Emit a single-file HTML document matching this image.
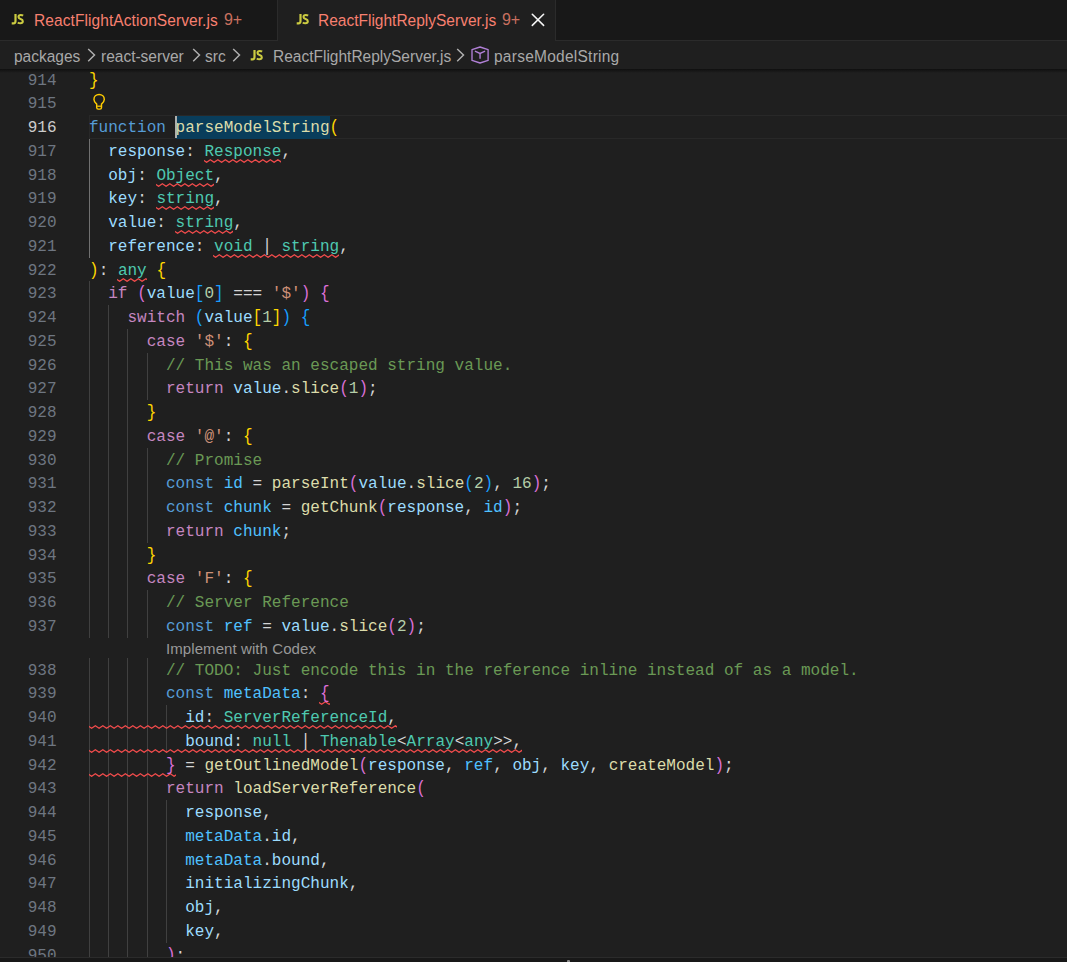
<!DOCTYPE html>
<html><head><meta charset="utf-8">
<style>
*{margin:0;padding:0;box-sizing:border-box}
html,body{width:1067px;height:962px;overflow:hidden;background:#1f1f1f}
body{position:relative;font-family:"Liberation Sans",sans-serif}
.abs{position:absolute}
#tabs{left:0;top:0;width:1067px;height:41px;background:#181818;border-bottom:1px solid #2b2b2b}
.tab{top:0;height:40px;border-right:1px solid #2b2b2b;background:#181818}
.tab.active{background:#1f1f1f;height:41px}
.tt{position:absolute;top:10.6px;font-size:15.5px;color:#f88070;white-space:nowrap;line-height:20px;transform:scaleY(1.09);transform-origin:0 15.4px}
.badge{position:absolute;top:10.3px;font-size:16px;color:#c8705f;white-space:nowrap;line-height:20px;letter-spacing:-0.2px}
.js{position:absolute;line-height:0}
#bc{left:0;top:41px;width:1067px;height:28px;background:#1f1f1f}
.bt{position:absolute;top:5.6px;font-size:15.5px;color:#a9a9a9;white-space:nowrap;line-height:20px;transform:scaleY(1.09);transform-origin:0 15.4px}
.chev{position:absolute;top:7px}
#shadow{left:0;top:69px;width:1067px;height:4px;background:linear-gradient(rgba(0,0,0,.5),rgba(0,0,0,0));z-index:5}
#editor{left:0;top:69px;width:1067px;height:888px;overflow:hidden;background:#1f1f1f}
.ln{position:absolute;left:0;width:56.5px;text-align:right;font-family:"Liberation Mono",monospace;font-size:16px;line-height:23.75px;color:#6e7681}
.ln.cur{color:#cccccc}
.code{position:absolute;left:89px;font-family:"Liberation Mono",monospace;font-size:16.04px;line-height:23.75px;color:#d4d4d4;white-space:pre}
.g{position:absolute;width:1px}
.pipe{display:inline-block;transform:translateY(-0.5px) scaleY(1.18);transform-origin:50% 10.5px}
.br{display:inline-block;transform:translateY(-0.8px) scaleY(1.14);transform-origin:50% 10.5px}
.curline{position:absolute;left:89px;width:980px;height:23.75px;border:1.25px solid #282828}
.sel{position:absolute;background:#093d5b}
.cursor{position:absolute;width:2px;background:#aeafad}
.lens{position:absolute;font-size:15px;letter-spacing:0.08px;color:#999999;line-height:20px;white-space:nowrap;padding-top:1.5px}
#bottom{left:0;top:957px;width:1067px;height:5px;background:#181818;border-top:1px solid #2b2b2b}
</style></head><body>
<div id="tabs" class="abs">
  <div class="tab abs" style="left:0;width:278px">
    <span class="js" style="left:11px;top:13.6px"><svg width="14" height="12" viewBox="0 0 14 12" style="overflow:visible"><path d="M4.5 0.1V7.3Q4.5 9.3 2.5 9.3H0.7" fill="none" stroke="#cbcb41" stroke-width="2.2"/><path d="M12.1 1.7Q11.2 1.05 9.8 1.05Q7.5 1.05 7.5 2.9Q7.5 4.2 9.6 4.9Q11.8 5.65 11.8 7.3Q11.8 9.3 9.4 9.3Q7.8 9.3 6.8 8.5" fill="none" stroke="#cbcb41" stroke-width="2.1"/></svg></span>
    <span class="tt" style="left:34px;letter-spacing:0.08px">ReactFlightActionServer.js</span>
    <span class="badge" style="left:224px">9+</span>
  </div>
  <div class="tab abs active" style="left:278px;width:278px">
    <span class="js" style="left:18px;top:13.6px"><svg width="14" height="12" viewBox="0 0 14 12" style="overflow:visible"><path d="M4.5 0.1V7.3Q4.5 9.3 2.5 9.3H0.7" fill="none" stroke="#cbcb41" stroke-width="2.2"/><path d="M12.1 1.7Q11.2 1.05 9.8 1.05Q7.5 1.05 7.5 2.9Q7.5 4.2 9.6 4.9Q11.8 5.65 11.8 7.3Q11.8 9.3 9.4 9.3Q7.8 9.3 6.8 8.5" fill="none" stroke="#cbcb41" stroke-width="2.1"/></svg></span>
    <span class="tt" style="left:40px">ReactFlightReplyServer.js</span>
    <span class="badge" style="left:224px">9+</span>
    <svg class="abs" style="left:253px;top:13px" width="14" height="14" viewBox="0 0 14 14"><path d="M1.3 1.3L12.6 12.4M12.6 1.3L1.3 12.4" stroke="#f4f4f4" stroke-width="1.6" stroke-linecap="round"/></svg>
  </div>
</div>
<div id="bc" class="abs">
  <span class="bt" style="left:14px">packages</span>
  <svg class="chev" style="left:86.5px" width="10" height="15" viewBox="0 0 10 15"><path d="M1.2 1.0L7.5 7.1L1.2 13.2" fill="none" stroke="#b0b0b0" stroke-width="1.45"/></svg>
  <span class="bt" style="left:101px">react-server</span>
  <svg class="chev" style="left:191.5px" width="10" height="15" viewBox="0 0 10 15"><path d="M1.2 1.0L7.5 7.1L1.2 13.2" fill="none" stroke="#b0b0b0" stroke-width="1.45"/></svg>
  <span class="bt" style="left:205px">src</span>
  <svg class="chev" style="left:231.5px" width="10" height="15" viewBox="0 0 10 15"><path d="M1.2 1.0L7.5 7.1L1.2 13.2" fill="none" stroke="#b0b0b0" stroke-width="1.45"/></svg>
  <span class="js" style="left:250px;top:8.7px"><svg width="14" height="12" viewBox="0 0 14 12" style="overflow:visible"><path d="M4.5 0.1V7.3Q4.5 9.3 2.5 9.3H0.7" fill="none" stroke="#cbcb41" stroke-width="2.2"/><path d="M12.1 1.7Q11.2 1.05 9.8 1.05Q7.5 1.05 7.5 2.9Q7.5 4.2 9.6 4.9Q11.8 5.65 11.8 7.3Q11.8 9.3 9.4 9.3Q7.8 9.3 6.8 8.5" fill="none" stroke="#cbcb41" stroke-width="2.1"/></svg></span>
  <span class="bt" style="left:273px">ReactFlightReplyServer.js</span>
  <svg class="chev" style="left:455.5px" width="10" height="15" viewBox="0 0 10 15"><path d="M1.2 1.0L7.5 7.1L1.2 13.2" fill="none" stroke="#b0b0b0" stroke-width="1.45"/></svg>
  <svg class="abs" style="left:470px;top:4px" width="20" height="20" viewBox="0 0 20 20"><path d="M10.05 2L18.1 4.6V15.4L10.05 18L2 15.4V4.6Z" fill="none" stroke="#b180d7" stroke-width="1.35" stroke-linejoin="round"/><path d="M4.9 6.2L10.05 8.4L15.1 6.2M10.05 8.4V13.8" fill="none" stroke="#b180d7" stroke-width="1.35"/></svg>
  <span class="bt" style="left:494px;letter-spacing:0.25px">parseModelString</span>
</div>
<div id="editor" class="abs">
<div class="g" style="left:89.00px;top:69.75px;height:118.75px;background:#404040"></div>
<div class="g" style="left:89.00px;top:212.25px;height:356.25px;background:#404040"></div>
<div class="g" style="left:89.00px;top:588.50px;height:308.75px;background:#404040"></div>
<div class="g" style="left:108.00px;top:236.00px;height:332.50px;background:#404040"></div>
<div class="g" style="left:108.00px;top:588.50px;height:308.75px;background:#404040"></div>
<div class="g" style="left:127.00px;top:259.75px;height:308.75px;background:#404040"></div>
<div class="g" style="left:127.00px;top:588.50px;height:308.75px;background:#404040"></div>
<div class="g" style="left:147.00px;top:283.50px;height:47.50px;background:#404040"></div>
<div class="g" style="left:147.00px;top:378.50px;height:95.00px;background:#404040"></div>
<div class="g" style="left:147.00px;top:521.00px;height:47.50px;background:#404040"></div>
<div class="g" style="left:147.00px;top:588.50px;height:308.75px;background:#404040"></div>
<div class="g" style="left:166.00px;top:636.00px;height:47.50px;background:#404040"></div>
<div class="g" style="left:166.00px;top:731.00px;height:142.50px;background:#404040"></div>
<div class="g" style="left:89px;top:69.75px;height:118.75px;background:#707070"></div>
<div class="curline" style="top:46.00px"></div>
<div class="sel" style="left:175.62px;top:46.50px;width:154.00px;height:23.45px"></div>
<div class="cursor" style="left:175.12px;top:47.00px;height:21.75px"></div>
<svg class="abs" style="left:203.73px;top:89.90px;overflow:hidden" width="77.77" height="4.6"><polyline points="-1.15,0.80 2.60,3.30 6.35,0.80 10.10,3.30 13.85,0.80 17.60,3.30 21.35,0.80 25.10,3.30 28.85,0.80 32.60,3.30 36.35,0.80 40.10,3.30 43.85,0.80 47.60,3.30 51.35,0.80 55.10,3.30 58.85,0.80 62.60,3.30 66.35,0.80 70.10,3.30 73.85,0.80 77.60,3.30 81.35,0.80 85.10,3.30" fill="none" stroke="#f14c4c" stroke-width="1.3"/></svg>
<svg class="abs" style="left:155.61px;top:113.65px;overflow:hidden" width="58.52" height="4.6"><polyline points="-1.15,0.80 2.60,3.30 6.35,0.80 10.10,3.30 13.85,0.80 17.60,3.30 21.35,0.80 25.10,3.30 28.85,0.80 32.60,3.30 36.35,0.80 40.10,3.30 43.85,0.80 47.60,3.30 51.35,0.80 55.10,3.30 58.85,0.80 62.60,3.30" fill="none" stroke="#f14c4c" stroke-width="1.3"/></svg>
<svg class="abs" style="left:155.61px;top:137.40px;overflow:hidden" width="58.52" height="4.6"><polyline points="-1.15,0.80 2.60,3.30 6.35,0.80 10.10,3.30 13.85,0.80 17.60,3.30 21.35,0.80 25.10,3.30 28.85,0.80 32.60,3.30 36.35,0.80 40.10,3.30 43.85,0.80 47.60,3.30 51.35,0.80 55.10,3.30 58.85,0.80 62.60,3.30" fill="none" stroke="#f14c4c" stroke-width="1.3"/></svg>
<svg class="abs" style="left:174.86px;top:161.15px;overflow:hidden" width="58.52" height="4.6"><polyline points="-1.15,0.80 2.60,3.30 6.35,0.80 10.10,3.30 13.85,0.80 17.60,3.30 21.35,0.80 25.10,3.30 28.85,0.80 32.60,3.30 36.35,0.80 40.10,3.30 43.85,0.80 47.60,3.30 51.35,0.80 55.10,3.30 58.85,0.80 62.60,3.30" fill="none" stroke="#f14c4c" stroke-width="1.3"/></svg>
<svg class="abs" style="left:213.36px;top:184.90px;overflow:hidden" width="125.89" height="4.6"><polyline points="-1.15,0.80 2.60,3.30 6.35,0.80 10.10,3.30 13.85,0.80 17.60,3.30 21.35,0.80 25.10,3.30 28.85,0.80 32.60,3.30 36.35,0.80 40.10,3.30 43.85,0.80 47.60,3.30 51.35,0.80 55.10,3.30 58.85,0.80 62.60,3.30 66.35,0.80 70.10,3.30 73.85,0.80 77.60,3.30 81.35,0.80 85.10,3.30 88.85,0.80 92.60,3.30 96.35,0.80 100.10,3.30 103.85,0.80 107.60,3.30 111.35,0.80 115.10,3.30 118.85,0.80 122.60,3.30 126.35,0.80 130.10,3.30" fill="none" stroke="#f14c4c" stroke-width="1.3"/></svg>
<svg class="abs" style="left:117.11px;top:208.65px;overflow:hidden" width="29.64" height="4.6"><polyline points="-1.15,0.80 2.60,3.30 6.35,0.80 10.10,3.30 13.85,0.80 17.60,3.30 21.35,0.80 25.10,3.30 28.85,0.80 32.60,3.30 36.35,0.80" fill="none" stroke="#f14c4c" stroke-width="1.3"/></svg>
<svg class="abs" style="left:319.23px;top:632.40px;overflow:hidden" width="10.39" height="4.6"><polyline points="-1.15,0.80 2.60,3.30 6.35,0.80 10.10,3.30 13.85,0.80 17.60,3.30" fill="none" stroke="#f14c4c" stroke-width="1.3"/></svg>
<svg class="abs" style="left:88.52px;top:656.15px;overflow:hidden" width="308.48" height="4.6"><polyline points="-1.15,0.80 2.60,3.30 6.35,0.80 10.10,3.30 13.85,0.80 17.60,3.30 21.35,0.80 25.10,3.30 28.85,0.80 32.60,3.30 36.35,0.80 40.10,3.30 43.85,0.80 47.60,3.30 51.35,0.80 55.10,3.30 58.85,0.80 62.60,3.30 66.35,0.80 70.10,3.30 73.85,0.80 77.60,3.30 81.35,0.80 85.10,3.30 88.85,0.80 92.60,3.30 96.35,0.80 100.10,3.30 103.85,0.80 107.60,3.30 111.35,0.80 115.10,3.30 118.85,0.80 122.60,3.30 126.35,0.80 130.10,3.30 133.85,0.80 137.60,3.30 141.35,0.80 145.10,3.30 148.85,0.80 152.60,3.30 156.35,0.80 160.10,3.30 163.85,0.80 167.60,3.30 171.35,0.80 175.10,3.30 178.85,0.80 182.60,3.30 186.35,0.80 190.10,3.30 193.85,0.80 197.60,3.30 201.35,0.80 205.10,3.30 208.85,0.80 212.60,3.30 216.35,0.80 220.10,3.30 223.85,0.80 227.60,3.30 231.35,0.80 235.10,3.30 238.85,0.80 242.60,3.30 246.35,0.80 250.10,3.30 253.85,0.80 257.60,3.30 261.35,0.80 265.10,3.30 268.85,0.80 272.60,3.30 276.35,0.80 280.10,3.30 283.85,0.80 287.60,3.30 291.35,0.80 295.10,3.30 298.85,0.80 302.60,3.30 306.35,0.80 310.10,3.30 313.85,0.80" fill="none" stroke="#f14c4c" stroke-width="1.3"/></svg>
<svg class="abs" style="left:88.52px;top:679.90px;overflow:hidden" width="433.61" height="4.6"><polyline points="-1.15,0.80 2.60,3.30 6.35,0.80 10.10,3.30 13.85,0.80 17.60,3.30 21.35,0.80 25.10,3.30 28.85,0.80 32.60,3.30 36.35,0.80 40.10,3.30 43.85,0.80 47.60,3.30 51.35,0.80 55.10,3.30 58.85,0.80 62.60,3.30 66.35,0.80 70.10,3.30 73.85,0.80 77.60,3.30 81.35,0.80 85.10,3.30 88.85,0.80 92.60,3.30 96.35,0.80 100.10,3.30 103.85,0.80 107.60,3.30 111.35,0.80 115.10,3.30 118.85,0.80 122.60,3.30 126.35,0.80 130.10,3.30 133.85,0.80 137.60,3.30 141.35,0.80 145.10,3.30 148.85,0.80 152.60,3.30 156.35,0.80 160.10,3.30 163.85,0.80 167.60,3.30 171.35,0.80 175.10,3.30 178.85,0.80 182.60,3.30 186.35,0.80 190.10,3.30 193.85,0.80 197.60,3.30 201.35,0.80 205.10,3.30 208.85,0.80 212.60,3.30 216.35,0.80 220.10,3.30 223.85,0.80 227.60,3.30 231.35,0.80 235.10,3.30 238.85,0.80 242.60,3.30 246.35,0.80 250.10,3.30 253.85,0.80 257.60,3.30 261.35,0.80 265.10,3.30 268.85,0.80 272.60,3.30 276.35,0.80 280.10,3.30 283.85,0.80 287.60,3.30 291.35,0.80 295.10,3.30 298.85,0.80 302.60,3.30 306.35,0.80 310.10,3.30 313.85,0.80 317.60,3.30 321.35,0.80 325.10,3.30 328.85,0.80 332.60,3.30 336.35,0.80 340.10,3.30 343.85,0.80 347.60,3.30 351.35,0.80 355.10,3.30 358.85,0.80 362.60,3.30 366.35,0.80 370.10,3.30 373.85,0.80 377.60,3.30 381.35,0.80 385.10,3.30 388.85,0.80 392.60,3.30 396.35,0.80 400.10,3.30 403.85,0.80 407.60,3.30 411.35,0.80 415.10,3.30 418.85,0.80 422.60,3.30 426.35,0.80 430.10,3.30 433.85,0.80 437.60,3.30" fill="none" stroke="#f14c4c" stroke-width="1.3"/></svg>
<svg class="abs" style="left:88.52px;top:703.65px;overflow:hidden" width="87.11" height="4.6"><polyline points="-1.15,0.80 2.60,3.30 6.35,0.80 10.10,3.30 13.85,0.80 17.60,3.30 21.35,0.80 25.10,3.30 28.85,0.80 32.60,3.30 36.35,0.80 40.10,3.30 43.85,0.80 47.60,3.30 51.35,0.80 55.10,3.30 58.85,0.80 62.60,3.30 66.35,0.80 70.10,3.30 73.85,0.80 77.60,3.30 81.35,0.80 85.10,3.30 88.85,0.80 92.60,3.30" fill="none" stroke="#f14c4c" stroke-width="1.3"/></svg>
<div class="ln" style="top:1.0px">914</div>
<div class="code" style="top:1.0px"><span class="br" style="color:#ffd700">}</span></div>
<div class="ln" style="top:24.0px">915</div>
<div class="code" style="top:24.0px"></div>
<div class="ln cur" style="top:48.0px">916</div>
<div class="code" style="top:48.0px"><span style="color:#569cd6">function</span><span style="color:#d4d4d4"> </span><span style="color:#dcdcaa">parseModelString</span><span class="br" style="color:#ffd700">(</span></div>
<div class="ln" style="top:72.0px">917</div>
<div class="code" style="top:72.0px">  <span style="color:#9cdcfe">response</span><span style="color:#d4d4d4">: </span><span style="color:#4ec9b0">Response</span><span style="color:#d4d4d4">,</span></div>
<div class="ln" style="top:96.0px">918</div>
<div class="code" style="top:96.0px">  <span style="color:#9cdcfe">obj</span><span style="color:#d4d4d4">: </span><span style="color:#4ec9b0">Object</span><span style="color:#d4d4d4">,</span></div>
<div class="ln" style="top:119.0px">919</div>
<div class="code" style="top:119.0px">  <span style="color:#9cdcfe">key</span><span style="color:#d4d4d4">: </span><span style="color:#4ec9b0">string</span><span style="color:#d4d4d4">,</span></div>
<div class="ln" style="top:143.0px">920</div>
<div class="code" style="top:143.0px">  <span style="color:#9cdcfe">value</span><span style="color:#d4d4d4">: </span><span style="color:#4ec9b0">string</span><span style="color:#d4d4d4">,</span></div>
<div class="ln" style="top:167.0px">921</div>
<div class="code" style="top:167.0px">  <span style="color:#9cdcfe">reference</span><span style="color:#d4d4d4">: </span><span style="color:#4ec9b0">void</span><span style="color:#d4d4d4"> <span class="pipe">|</span> </span><span style="color:#4ec9b0">string</span><span style="color:#d4d4d4">,</span></div>
<div class="ln" style="top:191.0px">922</div>
<div class="code" style="top:191.0px"><span class="br" style="color:#ffd700">)</span><span style="color:#d4d4d4">: </span><span style="color:#4ec9b0">any</span><span style="color:#d4d4d4"> </span><span class="br" style="color:#ffd700">{</span></div>
<div class="ln" style="top:214.0px">923</div>
<div class="code" style="top:214.0px">  <span style="color:#c586c0">if</span><span style="color:#d4d4d4"> </span><span class="br" style="color:#da70d6">(</span><span style="color:#9cdcfe">value</span><span class="br" style="color:#179fff">[</span><span style="color:#b5cea8">0</span><span class="br" style="color:#179fff">]</span><span style="color:#d4d4d4"> === </span><span style="color:#ce9178">&#x27;$&#x27;</span><span class="br" style="color:#da70d6">)</span><span style="color:#d4d4d4"> </span><span class="br" style="color:#da70d6">{</span></div>
<div class="ln" style="top:238.0px">924</div>
<div class="code" style="top:238.0px">    <span style="color:#c586c0">switch</span><span style="color:#d4d4d4"> </span><span class="br" style="color:#179fff">(</span><span style="color:#9cdcfe">value</span><span class="br" style="color:#ffd700">[</span><span style="color:#b5cea8">1</span><span class="br" style="color:#ffd700">]</span><span class="br" style="color:#179fff">)</span><span style="color:#d4d4d4"> </span><span class="br" style="color:#179fff">{</span></div>
<div class="ln" style="top:262.0px">925</div>
<div class="code" style="top:262.0px">      <span style="color:#c586c0">case</span><span style="color:#d4d4d4"> </span><span style="color:#ce9178">&#x27;$&#x27;</span><span style="color:#d4d4d4">: </span><span class="br" style="color:#ffd700">{</span></div>
<div class="ln" style="top:286.0px">926</div>
<div class="code" style="top:286.0px">        <span style="color:#6a9955">// This was an escaped string value.</span></div>
<div class="ln" style="top:309.0px">927</div>
<div class="code" style="top:309.0px">        <span style="color:#c586c0">return</span><span style="color:#d4d4d4"> </span><span style="color:#9cdcfe">value</span><span style="color:#d4d4d4">.</span><span style="color:#dcdcaa">slice</span><span class="br" style="color:#da70d6">(</span><span style="color:#b5cea8">1</span><span class="br" style="color:#da70d6">)</span><span style="color:#d4d4d4">;</span></div>
<div class="ln" style="top:333.0px">928</div>
<div class="code" style="top:333.0px">      <span class="br" style="color:#ffd700">}</span></div>
<div class="ln" style="top:357.0px">929</div>
<div class="code" style="top:357.0px">      <span style="color:#c586c0">case</span><span style="color:#d4d4d4"> </span><span style="color:#ce9178">&#x27;@&#x27;</span><span style="color:#d4d4d4">: </span><span class="br" style="color:#ffd700">{</span></div>
<div class="ln" style="top:381.0px">930</div>
<div class="code" style="top:381.0px">        <span style="color:#6a9955">// Promise</span></div>
<div class="ln" style="top:404.0px">931</div>
<div class="code" style="top:404.0px">        <span style="color:#569cd6">const</span><span style="color:#d4d4d4"> </span><span style="color:#4fc1ff">id</span><span style="color:#d4d4d4"> = </span><span style="color:#dcdcaa">parseInt</span><span class="br" style="color:#da70d6">(</span><span style="color:#9cdcfe">value</span><span style="color:#d4d4d4">.</span><span style="color:#dcdcaa">slice</span><span class="br" style="color:#179fff">(</span><span style="color:#b5cea8">2</span><span class="br" style="color:#179fff">)</span><span style="color:#d4d4d4">, </span><span style="color:#b5cea8">16</span><span class="br" style="color:#da70d6">)</span><span style="color:#d4d4d4">;</span></div>
<div class="ln" style="top:428.0px">932</div>
<div class="code" style="top:428.0px">        <span style="color:#569cd6">const</span><span style="color:#d4d4d4"> </span><span style="color:#4fc1ff">chunk</span><span style="color:#d4d4d4"> = </span><span style="color:#dcdcaa">getChunk</span><span class="br" style="color:#da70d6">(</span><span style="color:#9cdcfe">response</span><span style="color:#d4d4d4">, </span><span style="color:#4fc1ff">id</span><span class="br" style="color:#da70d6">)</span><span style="color:#d4d4d4">;</span></div>
<div class="ln" style="top:452.0px">933</div>
<div class="code" style="top:452.0px">        <span style="color:#c586c0">return</span><span style="color:#d4d4d4"> </span><span style="color:#4fc1ff">chunk</span><span style="color:#d4d4d4">;</span></div>
<div class="ln" style="top:476.0px">934</div>
<div class="code" style="top:476.0px">      <span class="br" style="color:#ffd700">}</span></div>
<div class="ln" style="top:499.0px">935</div>
<div class="code" style="top:499.0px">      <span style="color:#c586c0">case</span><span style="color:#d4d4d4"> </span><span style="color:#ce9178">&#x27;F&#x27;</span><span style="color:#d4d4d4">: </span><span class="br" style="color:#ffd700">{</span></div>
<div class="ln" style="top:523.0px">936</div>
<div class="code" style="top:523.0px">        <span style="color:#6a9955">// Server Reference</span></div>
<div class="ln" style="top:547.0px">937</div>
<div class="code" style="top:547.0px">        <span style="color:#569cd6">const</span><span style="color:#d4d4d4"> </span><span style="color:#4fc1ff">ref</span><span style="color:#d4d4d4"> = </span><span style="color:#9cdcfe">value</span><span style="color:#d4d4d4">.</span><span style="color:#dcdcaa">slice</span><span class="br" style="color:#da70d6">(</span><span style="color:#b5cea8">2</span><span class="br" style="color:#da70d6">)</span><span style="color:#d4d4d4">;</span></div>
<div class="lens" style="left:166.00px;top:568.50px;height:20.0px">Implement with Codex</div>
<div class="ln" style="top:591.0px">938</div>
<div class="code" style="top:591.0px">        <span style="color:#6a9955">// TODO: Just encode this in the reference inline instead of as a model.</span></div>
<div class="ln" style="top:614.0px">939</div>
<div class="code" style="top:614.0px">        <span style="color:#569cd6">const</span><span style="color:#d4d4d4"> </span><span style="color:#4fc1ff">metaData</span><span style="color:#d4d4d4">: </span><span class="br" style="color:#da70d6">{</span></div>
<div class="ln" style="top:638.0px">940</div>
<div class="code" style="top:638.0px">          <span style="color:#9cdcfe">id</span><span style="color:#d4d4d4">: </span><span style="color:#4ec9b0">ServerReferenceId</span><span style="color:#d4d4d4">,</span></div>
<div class="ln" style="top:662.0px">941</div>
<div class="code" style="top:662.0px">          <span style="color:#9cdcfe">bound</span><span style="color:#d4d4d4">: </span><span style="color:#4ec9b0">null</span><span style="color:#d4d4d4"> <span class="pipe">|</span> </span><span style="color:#4ec9b0">Thenable</span><span style="color:#d4d4d4">&lt;</span><span style="color:#4ec9b0">Array</span><span style="color:#d4d4d4">&lt;</span><span style="color:#4ec9b0">any</span><span style="color:#d4d4d4">&gt;&gt;</span><span style="color:#d4d4d4">,</span></div>
<div class="ln" style="top:686.0px">942</div>
<div class="code" style="top:686.0px">        <span class="br" style="color:#da70d6">}</span><span style="color:#d4d4d4"> = </span><span style="color:#dcdcaa">getOutlinedModel</span><span class="br" style="color:#da70d6">(</span><span style="color:#9cdcfe">response</span><span style="color:#d4d4d4">, </span><span style="color:#4fc1ff">ref</span><span style="color:#d4d4d4">, </span><span style="color:#9cdcfe">obj</span><span style="color:#d4d4d4">, </span><span style="color:#9cdcfe">key</span><span style="color:#d4d4d4">, </span><span style="color:#dcdcaa">createModel</span><span class="br" style="color:#da70d6">)</span><span style="color:#d4d4d4">;</span></div>
<div class="ln" style="top:709.0px">943</div>
<div class="code" style="top:709.0px">        <span style="color:#c586c0">return</span><span style="color:#d4d4d4"> </span><span style="color:#dcdcaa">loadServerReference</span><span class="br" style="color:#da70d6">(</span></div>
<div class="ln" style="top:733.0px">944</div>
<div class="code" style="top:733.0px">          <span style="color:#9cdcfe">response</span><span style="color:#d4d4d4">,</span></div>
<div class="ln" style="top:757.0px">945</div>
<div class="code" style="top:757.0px">          <span style="color:#4fc1ff">metaData</span><span style="color:#d4d4d4">.</span><span style="color:#9cdcfe">id</span><span style="color:#d4d4d4">,</span></div>
<div class="ln" style="top:781.0px">946</div>
<div class="code" style="top:781.0px">          <span style="color:#4fc1ff">metaData</span><span style="color:#d4d4d4">.</span><span style="color:#9cdcfe">bound</span><span style="color:#d4d4d4">,</span></div>
<div class="ln" style="top:804.0px">947</div>
<div class="code" style="top:804.0px">          <span style="color:#9cdcfe">initializingChunk</span><span style="color:#d4d4d4">,</span></div>
<div class="ln" style="top:828.0px">948</div>
<div class="code" style="top:828.0px">          <span style="color:#9cdcfe">obj</span><span style="color:#d4d4d4">,</span></div>
<div class="ln" style="top:852.0px">949</div>
<div class="code" style="top:852.0px">          <span style="color:#9cdcfe">key</span><span style="color:#d4d4d4">,</span></div>
<div class="ln" style="top:876.0px">950</div>
<div class="code" style="top:876.0px">        <span class="br" style="color:#da70d6">)</span><span style="color:#d4d4d4">;</span></div>
<svg class="abs" style="left:92px;top:23.00px" width="15" height="19" viewBox="0 0 15 19"><path d="M4.7 12.1C3.3 10.8 1.95 9.5 1.95 7.4C1.95 4.5 4.2 2.5 7.1 2.5C10 2.5 12.3 4.5 12.3 7.4C12.3 9.5 10.9 10.8 9.5 12.1V15.4C9.5 16.5 8.8 17.1 7.9 17.1H6.3C5.4 17.1 4.7 16.5 4.7 15.4Z" fill="none" stroke="#ffcc00" stroke-width="1.45" stroke-linejoin="round"/><path d="M5.2 14.2H9" stroke="#ffcc00" stroke-width="1.3"/></svg>
</div>
<div id="shadow" class="abs"></div>
<div id="bottom" class="abs"></div>
<div class="abs" style="left:566.5px;top:960px;width:3px;height:3px;border-radius:1px;background:#8a8a8a"></div>
</body></html>
